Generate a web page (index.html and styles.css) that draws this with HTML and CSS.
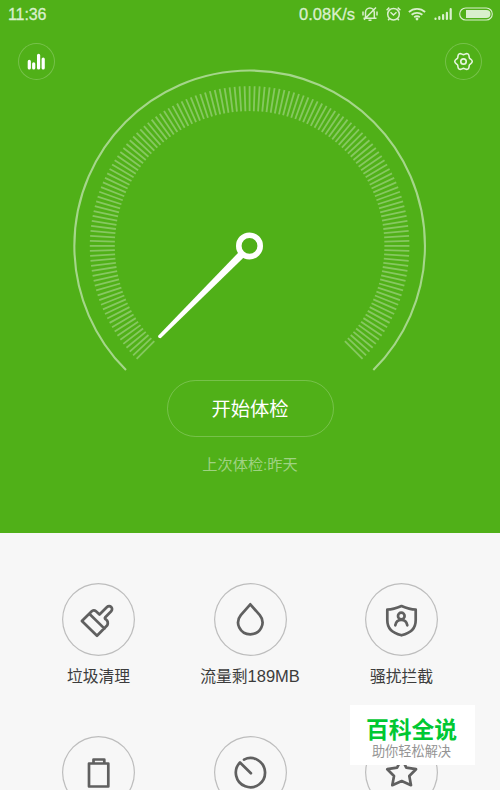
FILE: index.html
```
<!DOCTYPE html>
<html lang="zh-CN">
<head>
<meta charset="UTF-8">
<title>安全中心</title>
<link rel="stylesheet" href="styles.css">
</head>
<body>
<div class="hero">
  <div class="status-bar">
    <span class="time">11:36</span>
    <span class="speed">0.08K/s</span>
    <div class="status-icons">
      <!-- muted bell -->
      <svg width="16" height="14" viewBox="0 0 16 14" fill="none" stroke="currentColor" stroke-width="1.5">
        <path d="M3.500 10.500V5.500a4.400 4.400 0 0 1 8.800 0v5M1.500 11.200h13M6.500 13.200h3M14 0.500L2 12.800M1 4.500v4M15 4.500v4"/>
      </svg>
      <!-- alarm -->
      <svg width="15" height="14" viewBox="0 0 15 14" fill="none" stroke="currentColor" stroke-width="1.5">
        <circle cx="7.5" cy="7.2" r="5.8"/>
        <path d="M4.500 5.300l3 2.700 3-2.700M0.600 3.200l2.700-2.600M14.400 3.200l-2.700-2.600M3.500 11.500l-1.300 1.700M11.500 11.500l1.300 1.700"/>
      </svg>
      <!-- wifi -->
      <svg width="18" height="14" viewBox="0 0 18 14" fill="none" stroke="currentColor" stroke-width="1.8">
        <path d="M0.900 5a12 12 0 0 1 16.200 0M3.600 7.800a8.300 8.300 0 0 1 10.800 0M6.200 10.300a4.500 4.500 0 0 1 5.600 0"/>
        <circle cx="9" cy="12" r="1.4" fill="currentColor" stroke="none"/>
      </svg>
      <!-- signal -->
      <svg width="18" height="14" viewBox="0 0 18 14" fill="none" stroke="currentColor" stroke-width="2.2" stroke-linecap="round">
        <path d="M1.500 12v-.4M5.300 12v-2M9.100 12v-4M12.900 12v-6.200M16.700 12v-9.800"/>
      </svg>
      <!-- battery -->
      <svg width="34" height="14" viewBox="0 0 34 14">
        <rect x="0.700" y="1" width="32.600" height="12" rx="6" fill="none" stroke="currentColor" stroke-width="1.100"/>
        <path d="M7 2.900h20.400a4.100 4.100 0 0 1 0 8.200H7z" fill="currentColor"/>
      </svg>
    </div>
  </div>

  <div class="toolbar">
    <div class="round-btn">
      <svg width="37" height="37" viewBox="0 0 37 37" fill="none" stroke="#fff" stroke-width="3.200" stroke-linecap="round">
        <path d="M11.300 25v-6.600M15.700 25v-4.200M20.600 25v-12.700M25.200 25v-9"/>
      </svg>
    </div>
    <div class="round-btn">
      <svg width="37" height="37" viewBox="-18.500 -18.500 37 37" fill="none" stroke="#e6f5de" stroke-width="1.7">
        <path transform="scale(.93)" d="M9.400 0C9.400 2.200 7.150 2.400 6.400 3.700C5.650 5 6.600 7.040 4.700 8.140C2.800 9.240 1.500 7.400 0 7.400C-1.500 7.400 -2.800 9.240 -4.700 8.140C-6.600 7.040 -5.650 5 -6.400 3.700C-7.150 2.400 -9.400 2.200 -9.400 0C-9.400 -2.200 -7.150 -2.400 -6.400 -3.700C-5.650 -5 -6.600 -7.040 -4.700 -8.140C-2.800 -9.240 -1.500 -7.400 0 -7.400C1.500 -7.400 2.800 -9.240 4.700 -8.140C6.600 -7.040 5.650 -5 6.400 -3.700C7.150 -2.400 9.400 -2.200 9.400 0z"/>
        <circle r="2.700"/>
      </svg>
    </div>
  </div>

  <svg class="gauge" width="360" height="310" viewBox="0 0 360 310">
    <path class="gauge-arc" d="M56 304.100A175.300 175.300 0 1 1 303.300 304.100"/>
    <g id="ticks" class="ticks"></g>
    <path class="needle" d="M169.500 185.400L87.900 269.900Q88.300 272.500 90.900 272.100L174.700 190.600z"/>
    <circle class="hub" cx="179.500" cy="179.900" r="10.700"/>
  </svg>

  <button class="check-btn">开始体检</button>
  <div class="last-check">上次体检:昨天</div>
</div>

<div class="grid">
  <div class="item">
    <div class="icon">
      <svg viewBox="0 0 73 73">
        <path d="M19.900 38L30 28Q32 26.500 34 28.300L37.500 31.500L45 24A2.900 2.900 0 0 1 49.200 28.200L43.300 34.300Q42.300 35.300 43.800 36.300Q46.800 38.600 45.300 42.300L35 52.700zM27.300 30.800L42.500 45.600"/>
      </svg>
    </div>
    <div class="label">垃圾清理</div>
  </div>
  <div class="item">
    <div class="icon">
      <svg viewBox="0 0 73 73">
        <path d="M36.300 21.300L26.800 32.200C20.500 40 26 51.300 36.300 51.300S52.100 40 45.800 32.200z"/>
      </svg>
    </div>
    <div class="label">流量剩<span class="num">189MB</span></div>
  </div>
  <div class="item">
    <div class="icon">
      <svg viewBox="0 0 73 73">
        <path d="M36.500 23Q28.500 26.500 22.300 26.500V37C22.300 46 27 49.500 36.500 52.300C46 49.500 50.700 46 50.700 37V26.500Q44.500 26.500 36.500 23z"/>
        <circle cx="36.300" cy="33" r="3.300"/>
        <path d="M30.300 42.300C31 38 33.500 36.800 36.300 36.800S41.600 38 42.300 42.300"/>
      </svg>
    </div>
    <div class="label">骚扰拦截</div>
  </div>
  <div class="item">
    <div class="icon">
      <svg viewBox="0 0 73 73">
        <path d="M27 27.500H46.300V50.500H27zM31.500 27.500V23.500H42.300V27.500"/>
      </svg>
    </div>
  </div>
  <div class="item">
    <div class="icon">
      <svg viewBox="0 0 73 73">
        <path d="M30 23.600A14.600 14.600 0 1 1 26 26.500L36.900 37.300"/>
      </svg>
    </div>
  </div>
  <div class="item">
    <div class="icon">
      <svg viewBox="0 0 73 73">
        <path d="M36.700 22.500L41.300 31.700L51 33.200L44.300 40L46 49.200L36.700 45L27.300 49.200L29 40L22.300 33.200L32.100 31.700z"/>
      </svg>
    </div>
  </div>
</div>

<div class="badge">
  <div class="badge-title">百科全说</div>
  <div class="badge-sub">助你轻松解决</div>
</div>

<script>
// 151 ticks over 270 degrees
const ticks = document.getElementById('ticks');
for (let i = 0; i <= 150; i++) {
  const line = document.createElementNS('http://www.w3.org/2000/svg', 'line');
  line.setAttribute('x1', 179.6);
  line.setAttribute('x2', 179.6);
  line.setAttribute('y1', 20.1);
  line.setAttribute('y2', 45.1);
  line.setAttribute('transform', 'rotate(' + (-135 + i * 1.8) + ' 179.6 179.9)');
  ticks.appendChild(line);
}
</script>
</body>
</html>
```
FILE: styles.css
```
* {
  box-sizing: border-box;
}
body {
  margin: 0;
  width: 500px;
  height: 790px;
  overflow: hidden;
  position: relative;
  background: #f7f7f7;
  font-family: "Liberation Sans", "Noto Sans CJK SC", sans-serif;
}
svg {
  display: block;
}

.hero {
  height: 533px;
  background: #50b018;
  display: flex;
  flex-direction: column;
  align-items: center;
}
.status-bar {
  width: 100%;
  height: 28px;
  padding: 0 7px 0 8px;
  display: flex;
  align-items: center;
  color: #d9efcd;
  font-size: 16.5px;
}
.time {
  font-size: 16px;
  letter-spacing: -0.1px;
  margin-right: auto;
  padding-top: 1px;
  -webkit-text-stroke: 0.3px;
}
.speed {
  margin-right: 7px;
  padding-top: 1px;
  -webkit-text-stroke: 0.3px;
}
.status-icons {
  display: flex;
  gap: 7.5px;
}

.toolbar {
  width: 100%;
  padding: 14.5px 18.5px 0 18px;
  display: flex;
  justify-content: space-between;
}
.round-btn {
  width: 37px;
  height: 37px;
  border-radius: 50%;
  box-shadow: inset 0 0 0 1px rgba(255, 255, 255, 0.22);
}

.gauge {
  margin-top: -13.5px;
}
.gauge-arc {
  fill: none;
  stroke: #a5d68a;
  stroke-width: 2.1;
}
.ticks {
  stroke: #86c860;
  stroke-width: 1.8;
}
.needle {
  fill: #fff;
}
.hub {
  fill: #50b018;
  stroke: #fff;
  stroke-width: 5.6;
}

.check-btn {
  width: 167px;
  height: 57px;
  margin-top: 4px;
  padding: 0 0 1px;
  border: 1px solid rgba(255, 255, 255, 0.22);
  border-radius: 29px;
  background: none;
  color: #fff;
  font-family: inherit;
  font-size: 19.3px;
}
.last-check {
  margin-top: 17px;
  font-size: 15.2px;
  line-height: 22px;
  color: #9fd282;
}

.grid {
  width: 454.5px;
  height: 257px;
  overflow: hidden;
  margin: 0 auto;
  padding-top: 49.6px;
  display: grid;
  grid-template-columns: repeat(3, 1fr);
  grid-template-rows: 153.3px 104px;
}
.item {
  display: flex;
  flex-direction: column;
  align-items: center;
  min-height: 0;
}
.icon {
  flex: none;
  width: 73px;
  height: 73px;
  border-radius: 50%;
  box-shadow: inset 0 0 0 1.2px #bdbdbd;
}
.icon svg {
  fill: none;
  stroke: #606060;
  stroke-width: 2.7;
  stroke-linejoin: round;
  stroke-linecap: round;
}
.label {
  margin-top: 9px;
  font-size: 15.8px;
  line-height: 24px;
  color: #3c3c3c;
  white-space: nowrap;
}
.num {
  font-size: 16.5px;
  line-height: 1;
}

.badge {
  position: absolute;
  left: 350px;
  top: 705px;
  width: 125px;
  height: 60px;
  padding-right: 2px;
  background: #fff;
  text-align: center;
}
.badge-title {
  padding-top: 11px;
  font-size: 22.8px;
  line-height: 28px;
  font-weight: bold;
  color: #00c832;
}
.badge-sub {
  font-size: 13.2px;
  line-height: 15px;
  color: #949494;
}
```
